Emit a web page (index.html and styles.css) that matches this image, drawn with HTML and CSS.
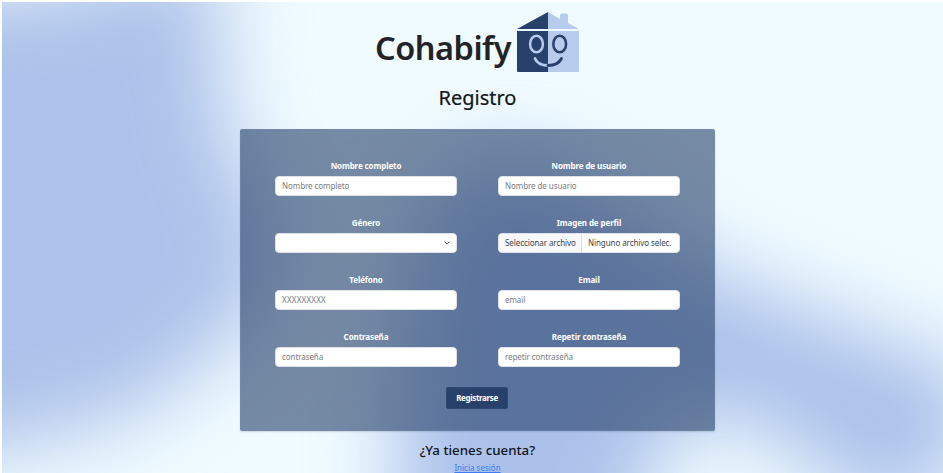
FILE: index.html
```html
<!DOCTYPE html>
<html lang="es">
<head>
<meta charset="utf-8">
<title>Cohabify - Registro</title>
<link rel="stylesheet" href="styles.css">
</head>
<body>
<svg class="backdrop" viewBox="0 0 943 473" preserveAspectRatio="none" aria-hidden="true">
  <defs>
    <filter id="soft" color-interpolation-filters="sRGB" filterUnits="userSpaceOnUse" x="-300" y="-300" width="1600" height="1100"><feGaussianBlur stdDeviation="40"/></filter>
  </defs>
  <rect width="943" height="473" fill="#f0fbff"/>
  <g filter="url(#soft)">
    <path d="M-300 8 L60 -15 Q130 -40 218 -50 Q212 90 234 155 Q294 240 262 302 Q215 360 145 405 Q70 450 -300 490Z" fill="#adc2ea"/>
    <path d="M424 215 Q480 130 570 178 L720 275 L860 330 L970 372 Q990 430 945 485 Q895 525 850 495 L775 435 Q730 408 685 422 Q635 438 605 680 L398 680 Q390 350 412 260Z" fill="#abc1ea"/>
  </g>
</svg>
<main class="page">
  <header class="brand">
    <span class="brand-name">Cohabify</span>
    <svg class="brand-logo" viewBox="0 0 64 62" aria-hidden="true">
      <path d="M32 1 44 8V4.500Q44 2.500 46 2.500H50Q52 2.500 52 4.500V12L63 18H32Z" fill="#b7cbed"/>
      <path d="M32 1V18H1Z" fill="#28416b"/>
      <path d="M1 20H32V61H2Q1 61 1 60Z" fill="#28416b"/>
      <path d="M32 20H63V60Q63 61 62 61H32Z" fill="#b7cbed"/>
      <ellipse cx="20.500" cy="33" rx="6.400" ry="8.300" fill="none" stroke="#b7cbed" stroke-width="2.500"/>
      <ellipse cx="43.700" cy="33" rx="6.400" ry="8.300" fill="none" stroke="#28416b" stroke-width="2.500"/>
      <path d="M19 47.500Q22 54.500 32 54.500" fill="none" stroke="#b7cbed" stroke-width="2.800" stroke-linecap="round"/>
      <path d="M32 54.500Q42 54.500 45.500 47.500" fill="none" stroke="#28416b" stroke-width="2.800" stroke-linecap="round"/>
    </svg>
  </header>
  <h1 class="title">Registro</h1>
  <form class="panel">
    <div class="fields">
      <label class="field"><span class="label">Nombre completo</span><input class="control" type="text" placeholder="Nombre completo"></label>
      <label class="field"><span class="label">Nombre de usuario</span><input class="control" type="text" placeholder="Nombre de usuario"></label>
      <label class="field"><span class="label">Género</span>
        <span class="control select"><svg class="chevron" viewBox="0 0 16 16" aria-hidden="true"><path d="m2 5 6 6 6-6"/></svg></span></label>
      <label class="field"><span class="label">Imagen de perfil</span>
        <span class="control file"><span class="file-button">Seleccionar archivo</span><span class="file-name">Ninguno archivo selec.</span></span></label>
      <label class="field"><span class="label">Teléfono</span><input class="control phone" type="text" placeholder="XXXXXXXXX"></label>
      <label class="field"><span class="label">Email</span><input class="control" type="text" placeholder="email"></label>
      <label class="field"><span class="label">Contraseña</span><input class="control" type="password" placeholder="contraseña"></label>
      <label class="field"><span class="label">Repetir contraseña</span><input class="control" type="password" placeholder="repetir contraseña"></label>
    </div>
    <button class="submit" type="button">Registrarse</button>
  </form>
  <h2 class="question">¿Ya tienes cuenta?</h2>
  <a class="login" href="#">Inicia sesión</a>
</main>
</body>
</html>
```
FILE: styles.css
```css
* { box-sizing: border-box; }
body {
  margin: 0;
  height: 473px;
  overflow: hidden;
  background: #fff;
  font-family: "Noto Sans", "Open Sans", sans-serif;
  font-size: 8px;
  color: #212529;
}
.backdrop {
  position: absolute;
  inset: 2px 0 0 2px;
  width: 941px;
  height: 471px;
}
.page {
  position: relative;
  display: flex;
  flex-direction: column;
  align-items: center;
  padding: 11px 0 0 12px;
}
.brand { display: flex; height: 62px; gap: 5px; }
.brand-name {
  font-size: 32.5px;
  line-height: 62px;
  padding-top: 6px;
  font-weight: 600;
  letter-spacing: -0.5px;
  white-space: nowrap;
  color: #222326;
}
.brand-logo { width: 64px; height: 62px; }
.title {
  margin: 11px 0 0;
  font-size: 20px;
  line-height: 28px;
  font-weight: 400;
  letter-spacing: 0;
  color: #111418;
  -webkit-text-stroke: 0.2px #111418;
}
.panel {
  width: 475px;
  height: 302px;
  margin: 17px 0 0;
  padding: 30px 34px 0;
  display: flex;
  flex-direction: column;
  align-items: center;
  background: rgba(40, 65, 107, 0.61);
  border: 1px solid rgba(120, 140, 175, 0.35);
  border-radius: 2px;
  box-shadow: 0 1px 2px rgba(40, 65, 107, 0.2);
}
.fields {
  width: 405px;
  display: grid;
  grid-template-columns: 182px 182px;
  justify-content: space-between;
  grid-auto-rows: 57px;
}
.field { display: flex; flex-direction: column; text-align: center; }
.label {
  height: 16px;
  line-height: 11px;
  font-weight: 700;
  letter-spacing: -0.1px;
  color: #fff;
}
.control {
  display: block;
  width: 182px;
  height: 20px;
  padding: 0 6px;
  border: 1px solid #dee2e6;
  border-radius: 4px;
  background: #fff;
  font: 400 8px/18px "Noto Sans", "Open Sans", sans-serif;
  letter-spacing: -0.08px;
  color: #40454a;
}
input.control { padding-bottom: 1px; }
.control::placeholder { color: #797d82; opacity: 1; }
.phone { letter-spacing: 0.2px; }
.select { display: flex; align-items: center; justify-content: flex-end; }
.chevron { width: 6px; height: 6px; fill: none; stroke: #343a40; stroke-width: 2.4; stroke-linecap: round; stroke-linejoin: round; }
.file { display: flex; padding: 0; overflow: hidden; white-space: nowrap; }
.file-button { width: 83px; padding-left: 6px; text-align: left; background: #f8f9fa; border-right: 1px solid #dee2e6; }
.file-name { padding-left: 6px; }
.submit {
  width: 62px;
  height: 22px;
  margin: -1px 1px 0 0;
  flex-shrink: 0;
  padding: 0;
  border: 1px solid #31496f;
  border-radius: 2px;
  background: #28416b;
  color: #fff;
  font: 700 8px/18px "Noto Sans", "Open Sans", sans-serif;
  letter-spacing: -0.35px;
}
.question {
  margin: 10px 0 0;
  font-size: 13.3px;
  line-height: 18px;
  font-weight: 500;
  color: #111418;
}
.login { margin-top: 3px; line-height: 12px; color: #3c7bf5; text-decoration: underline; }
```
